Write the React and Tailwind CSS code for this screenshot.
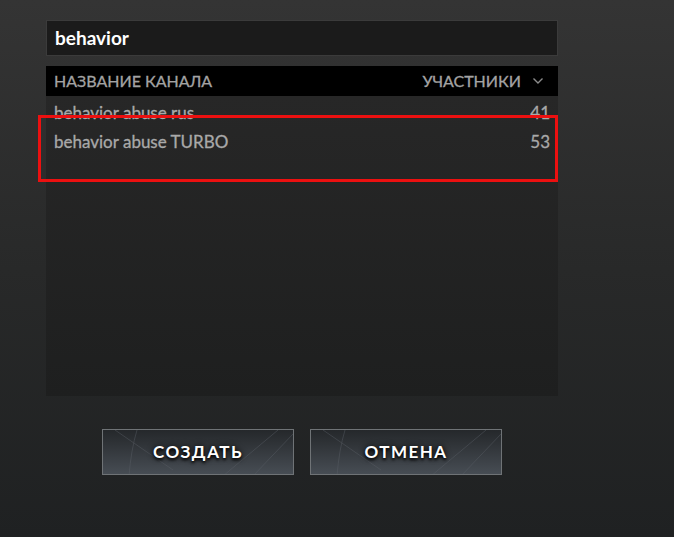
import React from "react";

const channels = [
  { name: "behavior abuse rus", count: 41 },
  { name: "behavior abuse TURBO", count: 53 },
];

const Chevron = () => (
  <svg width="12" height="8" viewBox="0 0 12 8" className="ml-[11px]">
    <path d="M1.5 1.5 L6 6 L10.5 1.5" fill="none" stroke="#8c8c8c" strokeWidth="1.4" />
  </svg>
);

const DotaButton = ({ children }) => (
  <button className="relative h-[46px] w-[192px] overflow-hidden border border-[#6f7376] bg-gradient-to-b from-[#25282b] to-[#474d54]">
    <svg className="absolute inset-0" width="192" height="46" viewBox="0 0 192 46">
      <g stroke="#5a6067" strokeWidth="0.8" fill="none" opacity="0.55">
        <path d="M12 0 L70 40" />
        <path d="M34 0 Q28 20 26 46" />
        <path d="M150 46 L190 4" />
        <path d="M120 46 L175 0" />
      </g>
    </svg>
    <span className="relative text-[17px] font-bold tracking-[1.5px] text-white [text-shadow:0_0_6px_#000,0_2px_3px_#000]">
      {children}
    </span>
  </button>
);

export default function App() {
  return (
    <div className="h-[537px] w-full bg-gradient-to-b from-[#343434] via-[#282929] to-[#1f2122] pl-[46px] pt-[20px] font-['Lato','Noto_Sans',sans-serif]">
      <div className="w-[512px]">
        <div className="flex h-[36px] items-center border border-[#3b3b3b] bg-[#1b1b1b] px-[8px] text-[19px] font-bold text-white">
          behavior
        </div>

        <div className="mt-[10px] flex h-[30px] items-center justify-between bg-black pl-[8px] pr-[14px] text-[16px] text-[#a3a3a3] [-webkit-text-stroke:0.3px_#a3a3a3]">
          <span>НАЗВАНИЕ КАНАЛА</span>
          <span className="flex items-center">
            УЧАСТНИКИ
            <Chevron />
          </span>
        </div>

        <div className="relative h-[300px] bg-gradient-to-b from-[#272727] to-[#1e1f1f] pt-[2px]">
          {channels.map((c) => (
            <div
              key={c.name}
              className="flex h-[29px] items-center justify-between pl-[8px] pr-[8px] text-[17px] text-[#a9a9a9] [-webkit-text-stroke:0.3px_#a9a9a9]"
            >
              <span>{c.name}</span>
              <span>{c.count}</span>
            </div>
          ))}
          <div className="absolute left-[-8px] top-[19px] h-[67px] w-[520px] border-[3px] border-[#ec1010]" />
        </div>

        <div className="ml-[56px] mt-[33px] flex gap-[16px]">
          <DotaButton>СОЗДАТЬ</DotaButton>
          <DotaButton>ОТМЕНА</DotaButton>
        </div>
      </div>
    </div>
  );
}
